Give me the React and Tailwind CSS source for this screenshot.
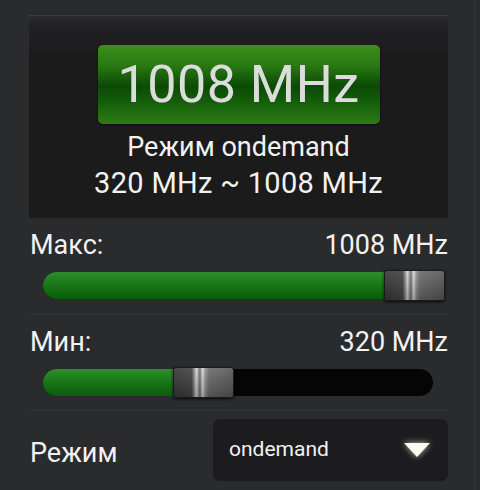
import React from 'react';

const Thumb = ({ left }) => (
  <div
    className="absolute top-[-2px] h-[31px] w-[61px] rounded-[3px] border border-[#1a1a1a] shadow-[0_1px_3px_rgba(0,0,0,0.8)] bg-[linear-gradient(90deg,#3a3a3a_0%,#454545_30%,#8a8a8a_34%,#d8d8d8_38%,#6a6a6a_44%,#dcdcdc_48%,#8a8a8a_54%,#6e6e6e_60%,#5a5a5a_100%)]"
    style={{ left }}
  >
    <div className="h-full w-full rounded-[3px] bg-[linear-gradient(180deg,rgba(255,255,255,0.08),rgba(0,0,0,0.25))]" />
  </div>
);

const Slider = ({ label, value, fill, thumb, trackWidth }) => (
  <div className="flex flex-col">
    <div className="flex items-end justify-between h-[30px] text-[27px] leading-none text-[#f2f2f2]">
      <span>{label}</span>
      <span>{value}</span>
    </div>
    <div className="relative mt-[13px] ml-[13px] h-[27px]" style={{ width: trackWidth }}>
      <div className="absolute inset-0 rounded-full bg-[#050505]" />
      <div
        className="absolute left-0 top-0 h-full rounded-l-full bg-[linear-gradient(180deg,#2f8e2c_0%,#1c7a1a_40%,#0a5c0a_100%)]"
        style={{ width: fill }}
      />
      <Thumb left={thumb} />
    </div>
  </div>
);

const App = () => {
  return (
    <div
      className="w-[480px] h-[490px] overflow-hidden bg-[#2a2b2d] flex"
      style={{ fontFamily: 'Roboto, "Liberation Sans", sans-serif' }}
    >
      <div className="w-[474px] pl-[30px] pr-[26px] pt-[15px] flex flex-col">
        {/* status panel */}
        <div className="h-[203px] w-[419px] -ml-[1px] bg-[linear-gradient(180deg,#2a2b2d_0px,#202022_12px,#1b1b1c_40px,#1b1b1c_100%)] border-t border-[#3a3b3d] flex flex-col items-center pt-[29px]">
          <div className="w-[282px] h-[79px] rounded-[5px] bg-[linear-gradient(180deg,#3c8f1c_0%,#2a7a12_25%,#0b4a05_52%,#135c0a_70%,#2b7c14_100%)] flex items-center justify-center shadow-[0_1px_2px_rgba(0,0,0,0.6)]">
            <span className="text-[52px] leading-none text-[#dcdcdc] tracking-[0.5px]">1008 MHz</span>
          </div>
          <div className="mt-[7px] text-[27px] leading-[32px] text-[#f2f2f2]">Режим ondemand</div>
          <div className="mt-[4px] text-[29px] leading-[32px] text-[#f2f2f2] tracking-[0.3px]">320 MHz ~ 1008 MHz</div>
        </div>

        <div className="mt-[11px]">
          <Slider label="Макс:" value="1008 MHz" fill="360px" thumb="341px" trackWidth="402px" />
        </div>
        <div className="mt-[15px] h-px bg-[#343537]" />

        <div className="mt-[11px]">
          <Slider label="Мин:" value="320 MHz" fill="140px" thumb="130px" trackWidth="390px" />
        </div>
        <div className="mt-[14px] h-px bg-[#343537]" />

        <div className="flex items-center justify-between mt-[8px]">
          <span className="text-[27px] leading-none text-[#f2f2f2] pt-[6px]">Режим</span>
          <div className="w-[235px] h-[62px] rounded-[7px] bg-[#1c1c1e] flex items-center justify-between pl-[16px] pr-[16px]">
            <span className="text-[21px] text-[#f2f2f2]">ondemand</span>
            <svg width="30" height="18" viewBox="0 0 30 18" className="drop-shadow-[0_0_3px_rgba(255,255,240,0.7)]">
              <polygon points="2,2 28,2 15,16" fill="#fbfbf0" />
            </svg>
          </div>
        </div>
      </div>
      <div className="w-[2px] h-full bg-[#303133]" />
    </div>
  );
};

export default App;
